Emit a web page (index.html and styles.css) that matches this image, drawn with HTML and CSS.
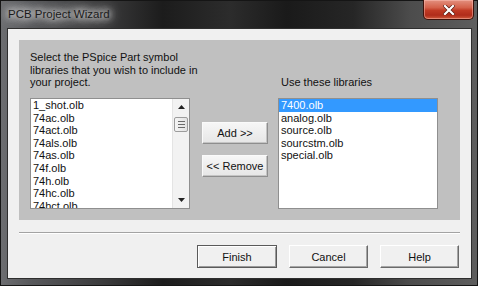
FILE: index.html
```html
<!DOCTYPE html>
<html lang="en">
<head>
  <meta charset="UTF-8" />
  <title>PCB Project Wizard</title>
  <link rel="stylesheet" href="styles.css">
</head>
<body>
  <div class="window">
    <div class="titlebar">
      <span class="title">PCB Project Wizard</span>
      <div class="close">
        <svg width="12" height="10" viewBox="0 0 12 10">
          <path d="M2 1 L10 9 M10 1 L2 9" stroke="#5a1a10" stroke-width="3.6" stroke-linecap="square"/>
          <path d="M2 1 L10 9 M10 1 L2 9" stroke="#fff" stroke-width="2.2" stroke-linecap="square"/>
        </svg>
      </div>
    </div>

    <div class="client">
      <div class="panel">
        <p class="intro">Select the PSpice Part symbol<br>libraries that you wish to include in<br>your project.</p>
        <span></span>
        <p class="label">Use these libraries</p>

        <div class="listbox">
          <ul>
            <li>1_shot.olb</li>
            <li>74ac.olb</li>
            <li>74act.olb</li>
            <li>74als.olb</li>
            <li>74as.olb</li>
            <li>74f.olb</li>
            <li>74h.olb</li>
            <li>74hc.olb</li>
            <li>74hct.olb</li>
          </ul>
          <div class="scrollbar">
            <div class="arrow">
              <svg width="7" height="4" viewBox="0 0 7 4"><polygon points="0,4 7,4 3.5,0" fill="#222"/></svg>
            </div>
            <div class="thumb"><i></i><i></i><i></i></div>
            <div class="track"></div>
            <div class="arrow">
              <svg width="7" height="4" viewBox="0 0 7 4"><polygon points="0,0 7,0 3.5,4" fill="#222"/></svg>
            </div>
          </div>
        </div>

        <div class="move-buttons">
          <button class="btn">Add &gt;&gt;</button>
          <button class="btn">&lt;&lt; Remove</button>
        </div>

        <div class="listbox">
          <ul>
            <li class="selected">7400.olb</li>
            <li>analog.olb</li>
            <li>source.olb</li>
            <li>sourcstm.olb</li>
            <li>special.olb</li>
          </ul>
        </div>
      </div>

      <div class="separator"></div>

      <div class="actions">
        <button class="btn btn-large default">Finish</button>
        <button class="btn btn-large">Cancel</button>
        <button class="btn btn-large">Help</button>
      </div>
    </div>
  </div>
</body>
</html>
```

FILE: styles.css
```css
body {
  margin: 0;
  font-family: 'Liberation Sans', Arial, sans-serif;
  font-size: 11px;
  color: #111;
  background: #2a2a2a;
}

.window {
  width: 478px;
  height: 286px;
  box-sizing: border-box;
  display: flex;
  flex-direction: column;
  border: 1px solid #151515;
  background:
    linear-gradient(90deg, #6c6d70 0, #58595c 6%, #3a3a3b 22%, #1c1c1c 34%, #2c2c2c 48%, #1a1a1a 60%, #262626 74%, #4c4c4c 86%, #5e5e5e 100%);
}

.titlebar {
  height: 28px;
  display: flex;
  align-items: flex-start;
}

.title {
  margin: 7px 0 0 7px;
  font-size: 11.5px;
  color: #1b1b1b;
  text-shadow: 0 0 6px #e4e4e4, 0 0 9px #d8d8d8, 0 0 12px #cfcfcf, 0 0 14px #c8c8c8;
}

.close {
  margin: -1px 3px 0 auto;
  width: 51px;
  height: 20px;
  box-sizing: border-box;
  display: flex;
  align-items: center;
  justify-content: center;
  border: 1px solid #3e120b;
  border-top: none;
  border-radius: 0 0 5px 5px;
  background: linear-gradient(#e3907f 0, #d4614a 40%, #c03a24 55%, #b02c1a 80%, #cf5a3c 100%);
  box-shadow: inset 0 0 0 1px rgba(255, 200, 190, 0.45);
}

.client {
  flex: 1;
  margin: 0 6px 7px 7px;
  padding: 11px 11px 0 11px;
  background: #f0f0f0;
  box-shadow: 0 0 0 1px #2e2e2e;
}

.panel {
  height: 180px;
  box-sizing: border-box;
  padding: 11px 21px 11px 11px;
  background: #c0c0c0;
  display: grid;
  grid-template-columns: 160px 88px 160px;
  grid-template-rows: auto 111px;
  row-gap: 9px;
}

.intro, .label {
  margin: 0;
  line-height: 12.6px;
  white-space: nowrap;
}

.label {
  align-self: end;
  padding-left: 3px;
}

.listbox {
  display: flex;
  background: #fff;
  border: 1px solid #8f8f8f;
  overflow: hidden;
}

.listbox ul {
  flex: 1;
  list-style: none;
  margin: 0;
  padding: 0;
}

.listbox li {
  height: 12.6px;
  line-height: 12.6px;
  padding-left: 2px;
  white-space: nowrap;
}

.listbox li.selected {
  background: #3399ff;
  color: #fff;
}

.scrollbar {
  width: 16px;
  display: flex;
  flex-direction: column;
  background: #f2f2f2;
  border-left: 1px solid #e4e4e4;
}

.arrow {
  height: 16px;
  display: flex;
  align-items: center;
  justify-content: center;
}

.thumb {
  height: 15px;
  margin: 2px 1px 0;
  box-sizing: border-box;
  border: 1px solid #9c9c9c;
  border-radius: 2px;
  background: linear-gradient(90deg, #f4f4f4, #e2e2e2);
  display: flex;
  flex-direction: column;
  justify-content: center;
  align-items: center;
  gap: 2px;
}

.thumb i {
  width: 7px;
  height: 1px;
  background: #6a6a6a;
}

.track {
  flex: 1;
}

.move-buttons {
  display: flex;
  flex-direction: column;
  gap: 11px;
  padding: 24px 0 0 12px;
}

.btn {
  font-family: inherit;
  font-size: 11px;
  color: #111;
  padding: 0;
  background: linear-gradient(#f6f6f6, #e6e6e6);
  border: 1px solid;
  border-color: #fafafa #8e8e8e #8e8e8e #fafafa;
  box-shadow: inset -1px -1px #c4c4c4;
}

.move-buttons .btn {
  width: 66px;
  height: 22px;
}

.separator {
  margin-top: 12px;
  height: 0;
  border-top: 1px solid #a3a3a3;
  border-bottom: 1px solid #fff;
}

.actions {
  display: flex;
  justify-content: flex-end;
  gap: 12px;
  margin-top: 11px;
  padding-right: 1px;
}

.btn-large {
  width: 79px;
  height: 23px;
  background: #f0f0f0;
  border-color: #ffffff #6a6a6a #6a6a6a #ffffff;
  box-shadow: inset -1px -1px #a6a6a6;
}

.btn-large.default {
  width: 80px;
  border-color: #5a5a5a;
  box-shadow: inset 1px 1px #fff, inset -1px -1px #9a9a9a;
}
```
